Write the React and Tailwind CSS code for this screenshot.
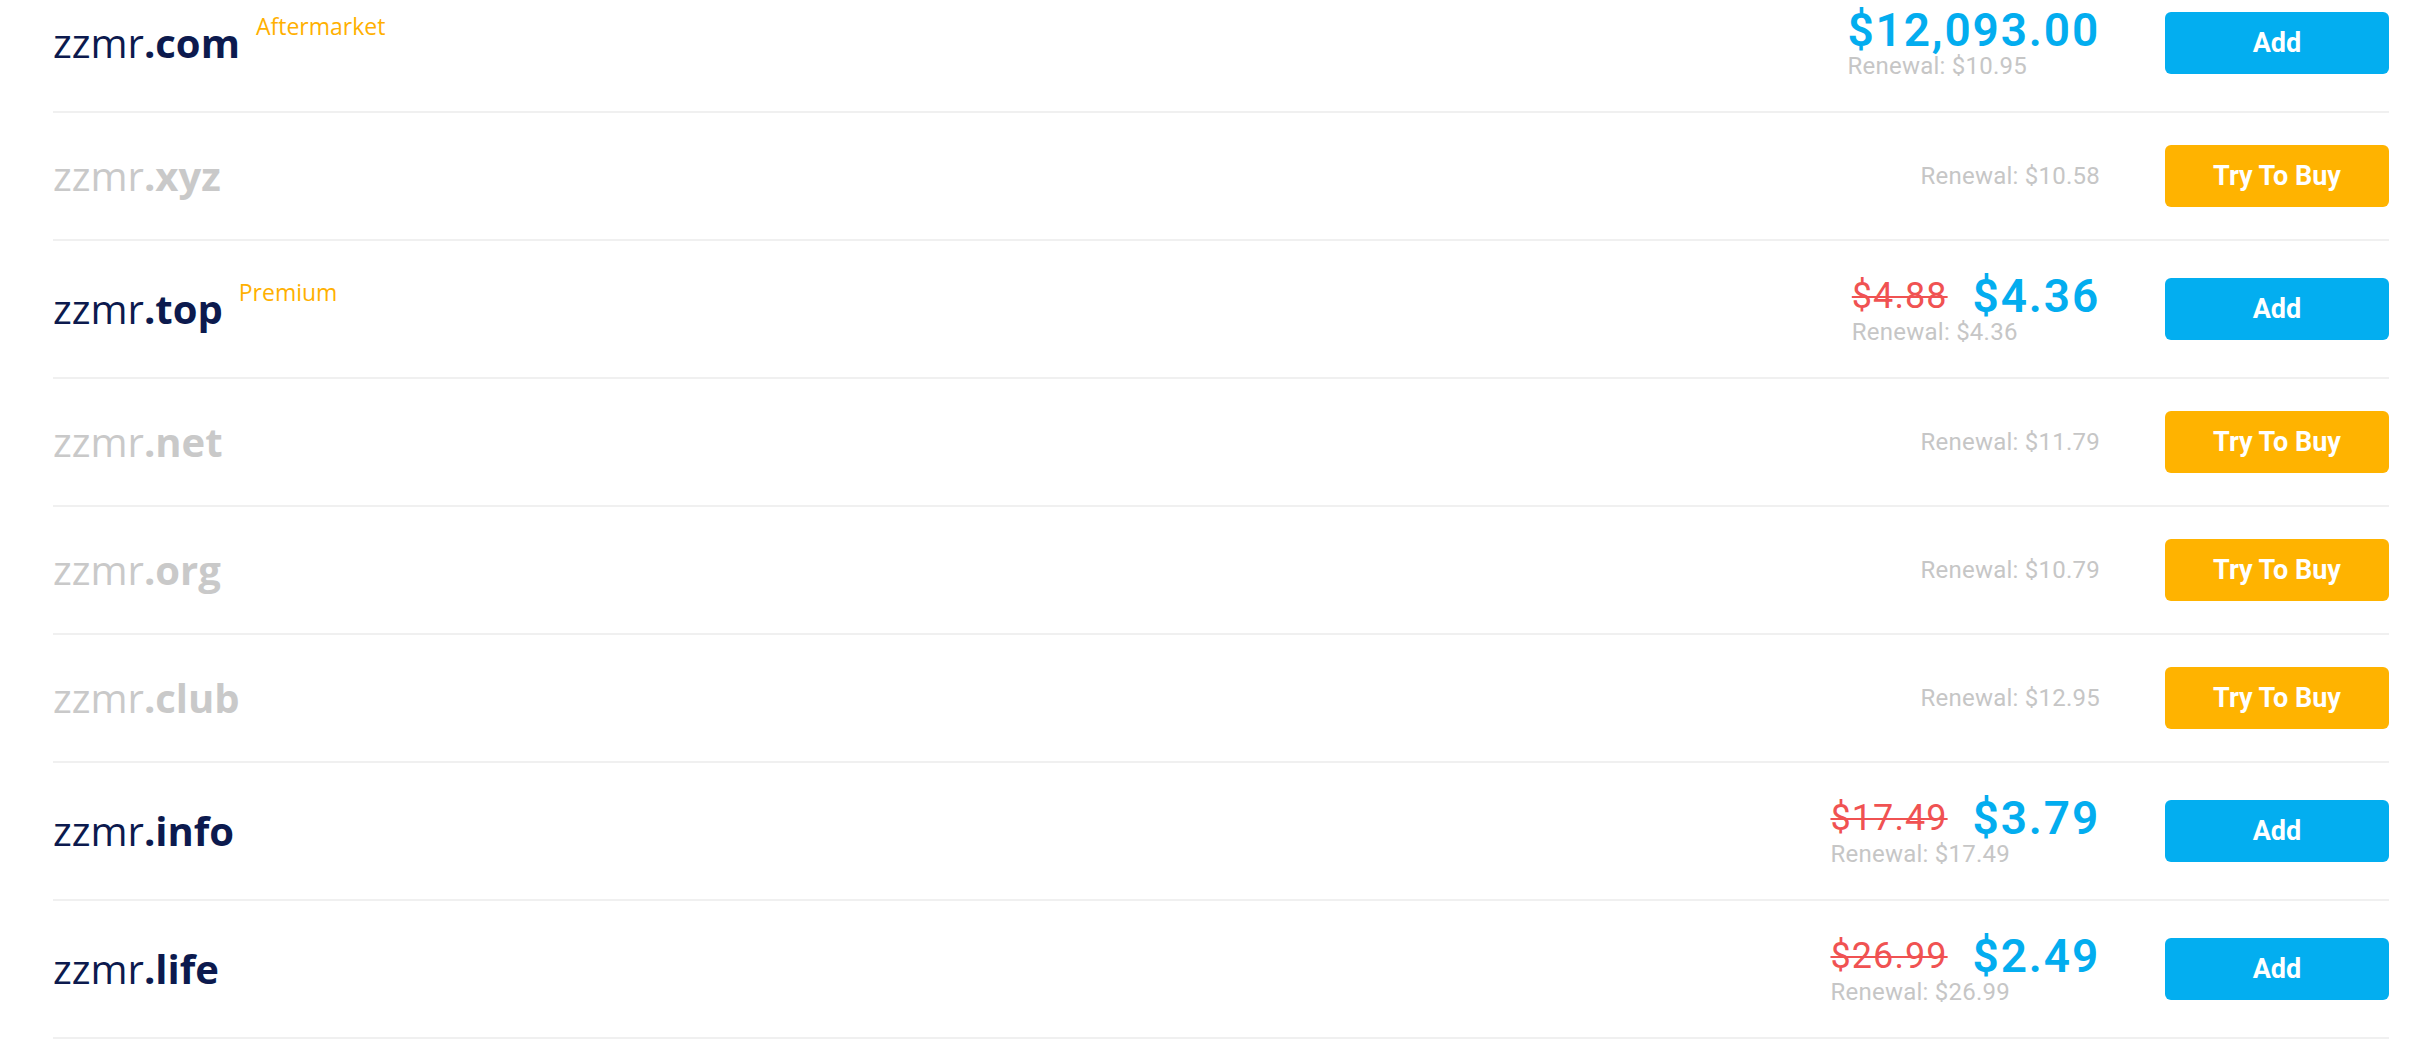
import React from "react";

const domains = [
  { name: "zzmr", tld: ".com", badge: "Aftermarket", price: "$12,093.00", renewal: "$10.95", available: true },
  { name: "zzmr", tld: ".xyz", renewal: "$10.58", available: false },
  { name: "zzmr", tld: ".top", badge: "Premium", oldPrice: "$4.88", price: "$4.36", renewal: "$4.36", available: true },
  { name: "zzmr", tld: ".net", renewal: "$11.79", available: false },
  { name: "zzmr", tld: ".org", renewal: "$10.79", available: false },
  { name: "zzmr", tld: ".club", renewal: "$12.95", available: false },
  { name: "zzmr", tld: ".info", oldPrice: "$17.49", price: "$3.79", renewal: "$17.49", available: true },
  { name: "zzmr", tld: ".life", oldPrice: "$26.99", price: "$2.49", renewal: "$26.99", available: true },
];

function DomainRow({ d }) {
  return (
    <div className="flex flex-row items-center py-[32px] border-b-2 border-[#f0f0f0]">
      <div className="flex flex-row items-start">
        <span
          className={
            "text-[40px] leading-[1.5] font-['Open_Sans',sans-serif] " +
            (d.available ? "text-[#0c1a4e]" : "text-[#c9c9c9]")
          }
        >
          {d.name}
          <span className="font-bold">{d.tld}</span>
        </span>
        {d.badge && (
          <span className="ml-4 text-[23px] leading-[1.2] text-[#ffb000] font-['Open_Sans',sans-serif]">
            {d.badge}
          </span>
        )}
      </div>

      <div className="ml-auto flex flex-col items-start font-['Roboto',sans-serif]">
        {d.price && (
          <div className="flex flex-row items-center h-[46px]">
            {d.oldPrice && (
              <span className="mr-[25px] text-[36px] leading-none text-[#f05252] tracking-[0.03em] line-through decoration-2">
                {d.oldPrice}
              </span>
            )}
            <span className="text-[46px] leading-[46px] font-semibold text-[#03adef] tracking-[0.04em]">{d.price}</span>
          </div>
        )}
        <span className="text-[24px] leading-[26px] text-[#c6c6c6] tracking-[0.01em]">Renewal: {d.renewal}</span>
      </div>

      <button
        className={
          "ml-[65px] w-[224px] h-[62px] rounded-[6px] text-white text-[27px] font-bold font-['Roboto',sans-serif] " +
          (d.available ? "bg-[#03aef0]" : "bg-[#ffb300]")
        }
      >
        {d.available ? "Add" : "Try To Buy"}
      </button>
    </div>
  );
}

export default function App() {
  return (
    <div className="w-full min-h-screen bg-white overflow-hidden">
      <div className="ml-[53px] w-[2336px] -mt-[25px]">
        {domains.map((d) => (
          <DomainRow key={d.tld} d={d} />
        ))}
      </div>
    </div>
  );
}
